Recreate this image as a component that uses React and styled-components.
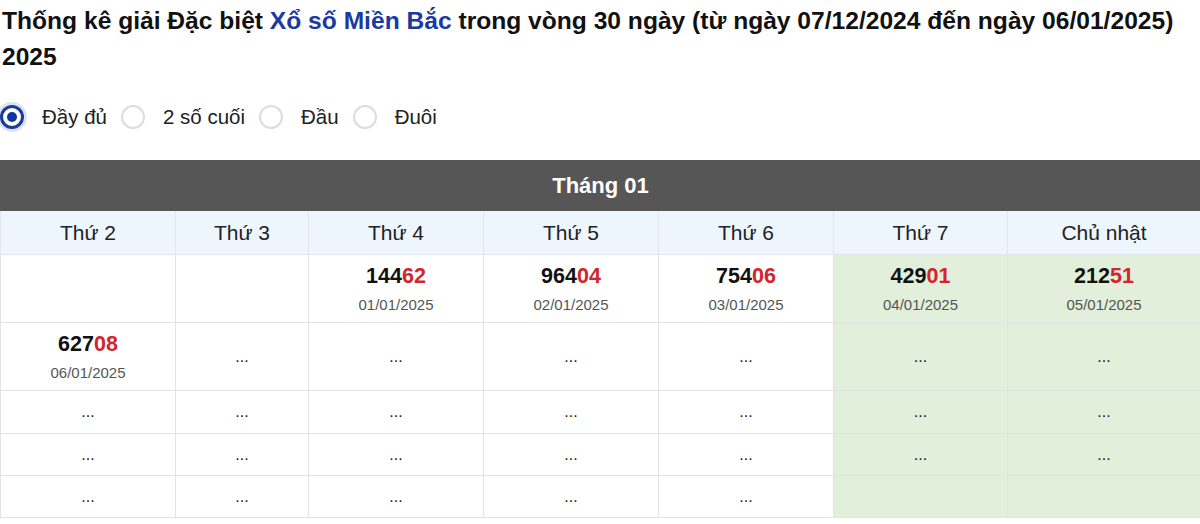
import React, { useState } from "react";
import styled, { createGlobalStyle } from "styled-components";

const GlobalStyle = createGlobalStyle`
    body {
        margin: 0;
        background: #fff;
        font-family: "Liberation Sans", Arial, sans-serif;
        color: #222;
    }
`;

const StyledPage = styled.div`
    width: 1200px;
`;

const StyledTitle = styled.h2`
    margin: 3px 0 0 2px;
    font-size: 24.6px;
    line-height: 36px;
    font-weight: bold;
    color: #111;
`;

const StyledLink = styled.span`
    color: #1b3a9f;
`;

const StyledOptions = styled.div`
    display: flex;
    align-items: center;
    height: 40px;
    margin-top: 22px;
`;

const StyledOption = styled.label`
    display: flex;
    align-items: center;
    gap: 18px;
    margin-right: 14px;
    font-size: 20.5px;
    color: #222;
    cursor: pointer;
`;

const StyledRadio = styled.span`
    box-sizing: border-box;
    width: 24px;
    height: 24px;
    border-radius: 50%;
    border: ${(p) => (p.$checked ? "3px solid #1a3c9e" : "2px solid #dcdcdc")};
    background: #fff;
    display: flex;
    align-items: center;
    justify-content: center;
    box-shadow: ${(p) => (p.$checked ? "0 0 0 3px rgba(26, 60, 158, 0.15)" : "none")};

    &::after {
        content: "";
        width: 10px;
        height: 10px;
        border-radius: 50%;
        background: ${(p) => (p.$checked ? "#0f35a2" : "transparent")};
    }
`;

const StyledTable = styled.table`
    width: 1200px;
    margin-top: 23px;
    border-collapse: collapse;
    table-layout: fixed;
    border: 1px solid #e3e3e3;
`;

const StyledMonth = styled.th`
    height: 49px;
    padding: 0;
    background: #565656;
    color: #fff;
    font-size: 22px;
    font-weight: bold;
    border: 1px solid #565656;
`;

const StyledDay = styled.th`
    height: 43px;
    padding: 0;
    background: #edf5fd;
    font-size: 21px;
    font-weight: normal;
    color: #222;
    border: 1px solid #e0e6ec;
`;

const StyledCell = styled.td`
    height: ${(p) => p.$h}px;
    padding: 0;
    text-align: center;
    vertical-align: middle;
    border: 1px solid #e3e3e3;
    background: ${(p) => (p.$weekend ? "#e1efdb" : "#fff")};
    font-size: 16px;
    color: #222;
`;

const StyledNumber = styled.div`
    font-size: 21.5px;
    font-weight: bold;
    color: #111;
    line-height: 24px;
`;

const StyledTail = styled.span`
    color: #d2262c;
`;

const StyledDate = styled.div`
    margin-top: 8px;
    font-size: 15px;
    color: #555;
`;

const widths = [175, 133, 175, 175, 175, 174, 193];
const days = ["Thứ 2", "Thứ 3", "Thứ 4", "Thứ 5", "Thứ 6", "Thứ 7", "Chủ nhật"];
const options = ["Đầy đủ", "2 số cuối", "Đầu", "Đuôi"];

const D = "...";
const rows = [
    { h: 67, cells: [null, null, ["14462", "01/01/2025"], ["96404", "02/01/2025"], ["75406", "03/01/2025"], ["42901", "04/01/2025"], ["21251", "05/01/2025"]] },
    { h: 67, cells: [["62708", "06/01/2025"], D, D, D, D, D, D] },
    { h: 42, cells: [D, D, D, D, D, D, D] },
    { h: 41, cells: [D, D, D, D, D, D, D] },
    { h: 41, cells: [D, D, D, D, D, null, null] },
];

function Result({ value }) {
    if (!value) return null;
    if (typeof value === "string") return value;
    const [num, date] = value;
    return (
        <>
            <StyledNumber>
                {num.slice(0, 3)}
                <StyledTail>{num.slice(3)}</StyledTail>
            </StyledNumber>
            <StyledDate>{date}</StyledDate>
        </>
    );
}

export default function App() {
    const [mode, setMode] = useState(0);

    return (
        <StyledPage>
            <GlobalStyle />
            <StyledTitle>
                Thống kê giải Đặc biệt <StyledLink>Xổ số Miền Bắc</StyledLink> trong vòng 30 ngày (từ ngày 07/12/2024 đến ngày 06/01/2025) 2025
            </StyledTitle>

            <StyledOptions>
                {options.map((label, i) => (
                    <StyledOption key={label} onClick={() => setMode(i)}>
                        <StyledRadio $checked={mode === i} />
                        {label}
                    </StyledOption>
                ))}
            </StyledOptions>

            <StyledTable>
                <colgroup>
                    {widths.map((w, i) => (
                        <col key={i} style={{ width: w }} />
                    ))}
                </colgroup>
                <thead>
                    <tr>
                        <StyledMonth colSpan={7}>Tháng 01</StyledMonth>
                    </tr>
                    <tr>
                        {days.map((d) => (
                            <StyledDay key={d}>{d}</StyledDay>
                        ))}
                    </tr>
                </thead>
                <tbody>
                    {rows.map((row, r) => (
                        <tr key={r}>
                            {row.cells.map((c, i) => (
                                <StyledCell key={i} $h={row.h} $weekend={i >= 5}>
                                    <Result value={c} />
                                </StyledCell>
                            ))}
                        </tr>
                    ))}
                </tbody>
            </StyledTable>
        </StyledPage>
    );
}
